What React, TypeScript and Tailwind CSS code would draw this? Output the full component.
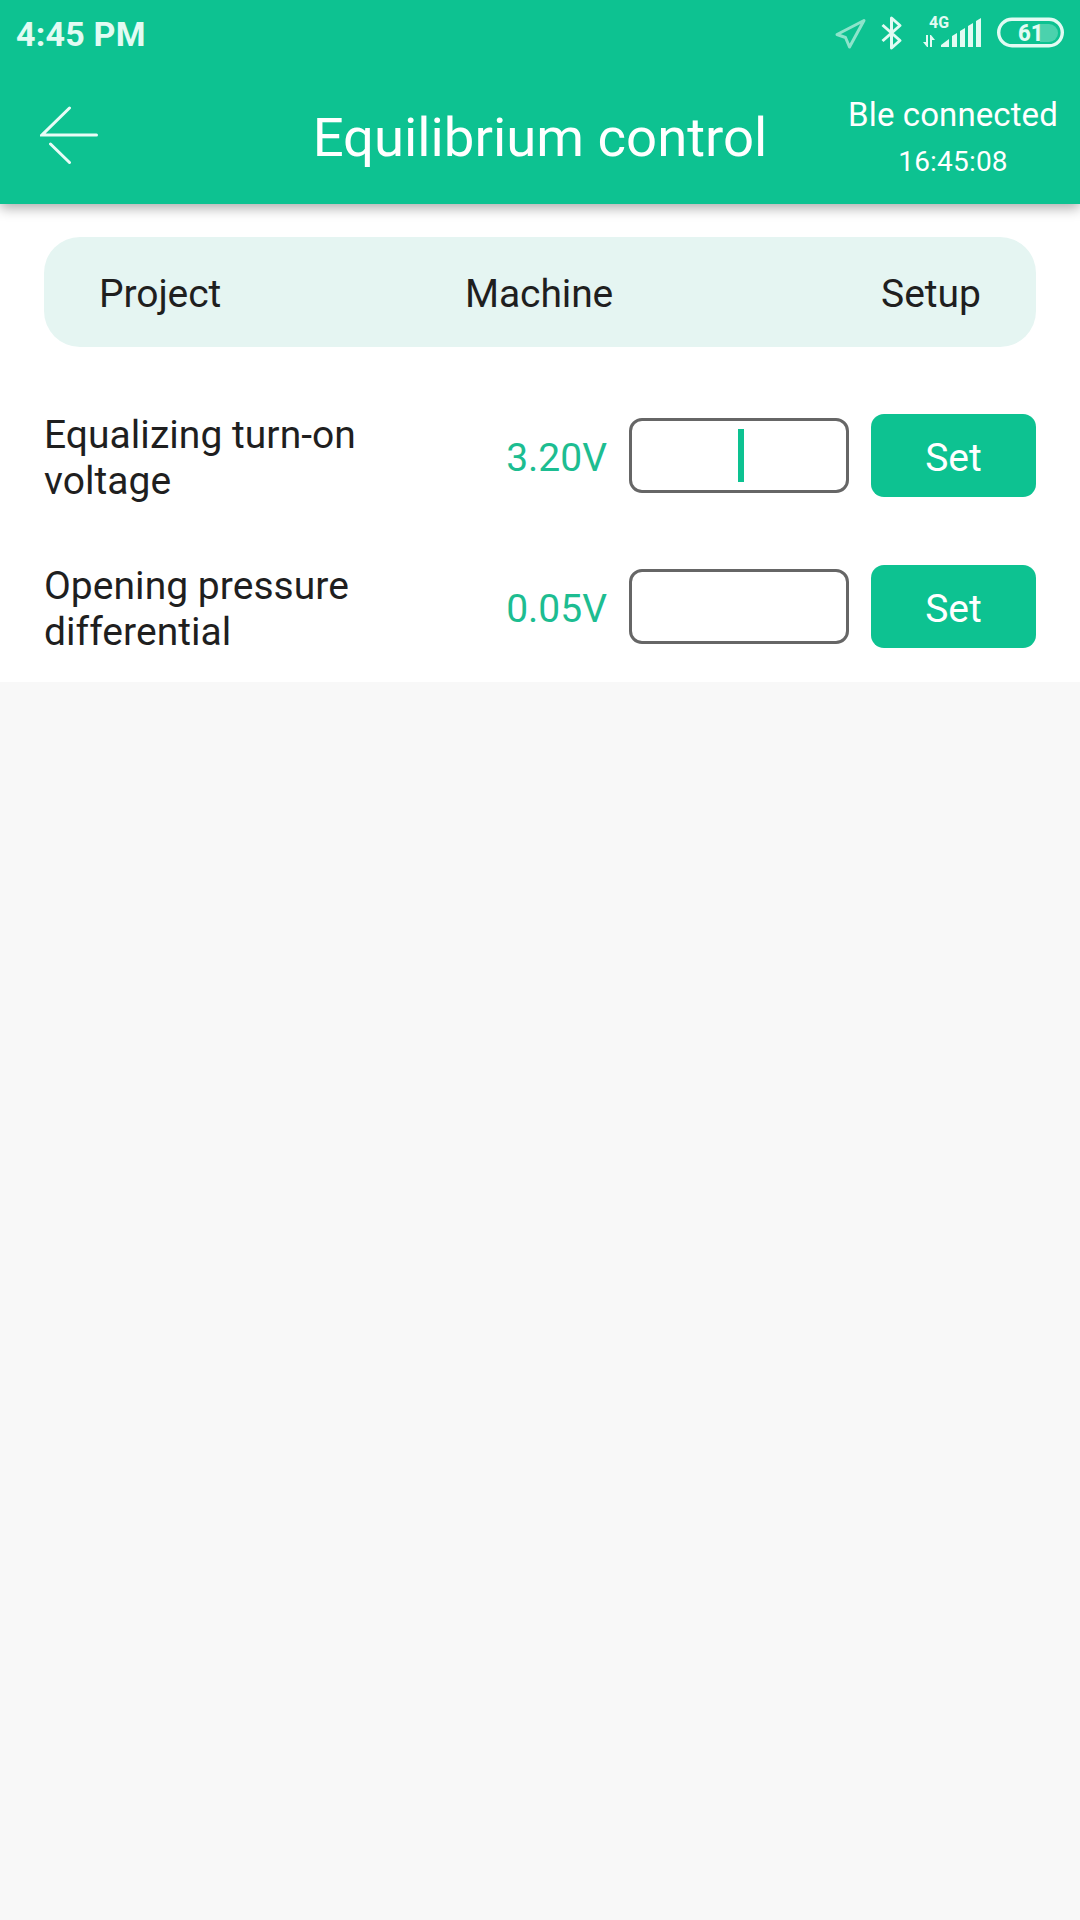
import type { ReactNode } from 'react';

// ── Types ────────────────────────────────────────────────
interface Setting {
  label: string;
  value: string;
  focused?: boolean;
}

const settings: Setting[] = [
  { label: 'Equalizing turn-on voltage', value: '3.20V', focused: true },
  { label: 'Opening pressure differential', value: '0.05V' },
];

// ── Status bar ───────────────────────────────────────────
function StatusBar() {
  return (
    <div className="flex h-[66px] items-center justify-between pl-4 pr-[15px] text-[#e2fbf3]">
      <span className="pt-px text-[34px] font-bold leading-none tracking-[0.2px]">4:45 PM</span>
      <svg className="h-[66px] w-[232px]" viewBox="833 0 232 66" fill="none">
        {/* Location */}
        <path
          d="M864 20.500 L837 34.500 L845.500 37.500 L849.500 47 Z"
          stroke="#8ce4cb"
          strokeWidth="3"
          strokeLinejoin="round"
        />
        {/* Bluetooth */}
        <path
          d="M882.5 25 L900 40.5 L891.5 48 V18 L900 25.5 L882.5 41"
          stroke="currentColor"
          strokeWidth="3"
          strokeLinejoin="round"
        />
        {/* Mobile network */}
        <text x="929" y="28" fontSize="16" fontWeight="700" textLength="20" lengthAdjust="spacingAndGlyphs" fill="currentColor">
          4G
        </text>
        <path d="M926 35 H928 V47 H927 L923 42 H926 Z M930 47 V35 H931 L935 40 H932 V47 Z" fill="currentColor" />
        <path
          d="M941 47 V45 L949 39 V47 Z M952 47 V36 L957 33 V47 Z M960 47 V31 L965 28 V47 Z M968 47 V26 L973 23 V47 Z M976 47 V21 L981 18 V47 Z"
          fill="currentColor"
        />
        {/* Battery */}
        <rect x="998.7" y="19.2" width="63.6" height="26.6" rx="13.3" stroke="currentColor" strokeWidth="3.4" />
        <path d="M1040 24 H1049 A9 9 0 0 1 1049 42 H1040 Z" fill="#4bd2ad" />
        <text
          x="1018"
          y="41"
          fontSize="24"
          fontWeight="800"
          textLength="25.5"
          lengthAdjust="spacingAndGlyphs"
          fill="currentColor"
        >
          61
        </text>
      </svg>
    </div>
  );
}

// ── Title bar ────────────────────────────────────────────
function TitleBar() {
  return (
    <div className="grid h-[138px] grid-cols-[1fr_460px_1fr] text-white">
      <button className="self-start pl-10 pt-10" aria-label="Back">
        <svg
          className="h-[60px] w-[60px]"
          viewBox="40 106 60 60"
          fill="none"
          stroke="#e9fcf7"
          strokeWidth="3"
          strokeLinecap="round"
        >
          <path d="M69.500 108 L42 135 H96.500 M50.500 144 L69.500 162.500" />
        </svg>
      </button>
      <h1 className="pt-[39px] text-center text-[54.5px] leading-[64px]">Equilibrium control</h1>
      <div className="w-[254px] justify-self-end pt-[29px] text-center">
        <p className="text-[33px] leading-10 tracking-[0.1px]">Ble connected</p>
        <p className="pt-[9px] text-[28px] leading-9 tracking-[0.2px]">16:45:08</p>
      </div>
    </div>
  );
}

function Cell({ children, className }: { children: ReactNode; className: string }) {
  return <span className={`pt-1 text-[39px] leading-[46px] ${className}`}>{children}</span>;
}

function SettingRow({ label, value, focused }: Setting) {
  return (
    <div className="flex h-[151px] items-center">
      <Cell className="w-[345px] tracking-[0.04px]">{label}</Cell>
      <Cell className="w-[218px] text-right text-[#1dbd91]">{value}</Cell>
      <div className="ml-[22px] flex h-[75px] w-[220px] items-center justify-center rounded-[13px] border-3 border-[#666666]">
        {focused && <span className="ml-1 h-[53px] w-1.5 bg-[#0dc291]" />}
      </div>
      <button className="ml-[22px] h-[83px] w-[165px] rounded-[13px] bg-[#0dc291] pt-1 text-[39px] leading-[46px] text-white">
        Set
      </button>
    </div>
  );
}

// ── Page ─────────────────────────────────────────────────
export default function App() {
  return (
    <div className="min-h-[1920px] w-[1080px] bg-[#f8f8f8] font-['Roboto',sans-serif] text-[#1f1f1f]">
      <header className="relative h-[204px] bg-[#0dc291] shadow-[0_4px_12px_rgba(0,0,0,0.33)]">
        <StatusBar />
        <TitleBar />
      </header>

      <main className="h-[478px] bg-white px-11 pt-[33px]">
        <div className="mb-[33px] flex h-[110px] items-center justify-between rounded-[36px] bg-[#e5f5f2] px-[55px]">
          <Cell className="w-[122px] tracking-[-0.1px]">Project</Cell>
          <Cell className="w-[148px] -translate-x-px tracking-[-0.1px]">Machine</Cell>
          <Cell className="w-[122px] text-right">Setup</Cell>
        </div>
        {settings.map((s) => (
          <SettingRow key={s.label} {...s} />
        ))}
      </main>
    </div>
  );
}
